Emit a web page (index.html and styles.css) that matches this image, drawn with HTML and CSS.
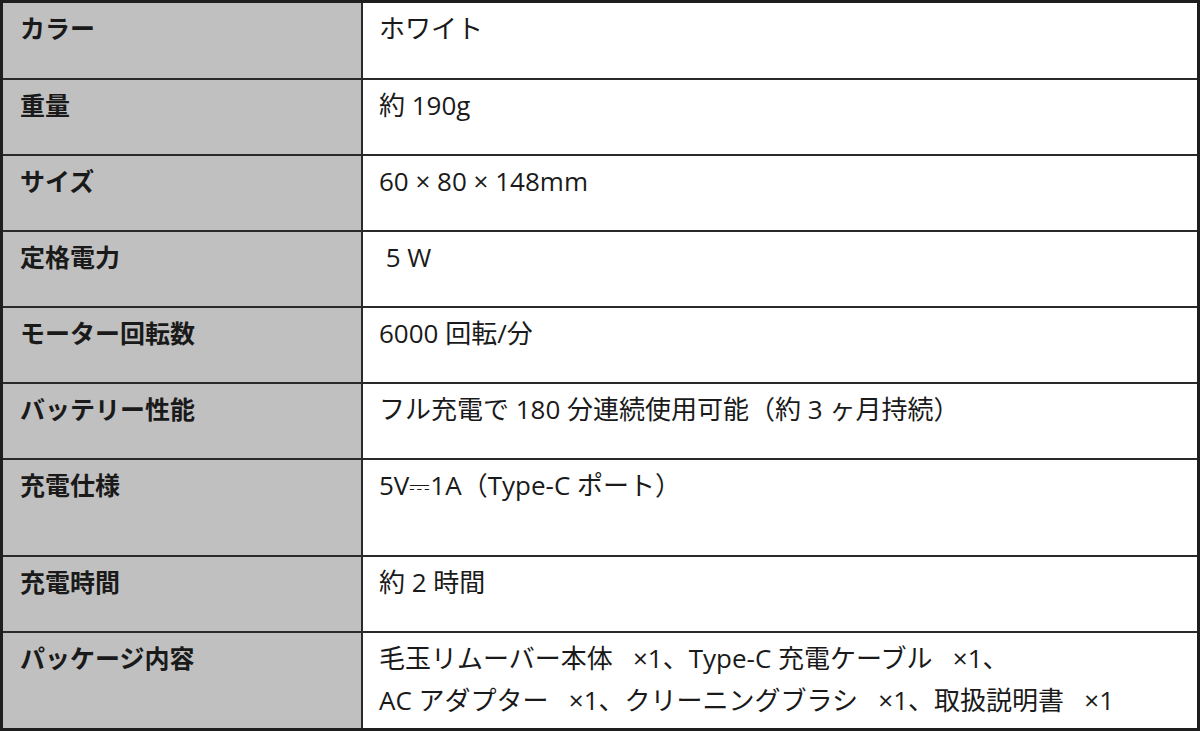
FILE: index.html
```html
<!DOCTYPE html>
<html lang="ja">
<head>
<meta charset="utf-8">
<link rel="stylesheet" href="styles.css">
</head>
<body>
<div class="spec">
  <div class="row"><div class="label">カラー</div><div class="value">ホワイト</div></div>
  <div class="row"><div class="label">重量</div><div class="value">約 190g</div></div>
  <div class="row"><div class="label">サイズ</div><div class="value">60 × 80 × 148mm</div></div>
  <div class="row"><div class="label">定格電力</div><div class="value">&nbsp;5 W</div></div>
  <div class="row"><div class="label">モーター回転数</div><div class="value">6000 回転/分</div></div>
  <div class="row"><div class="label">バッテリー性能</div><div class="value">フル充電で 180 分連続使用可能（約 3 ヶ月持続）</div></div>
  <div class="row"><div class="label">充電仕様</div><div class="value">5V⎓1A（Type-C ポート）</div></div>
  <div class="row"><div class="label">充電時間</div><div class="value">約 2 時間</div></div>
  <div class="row last"><div class="label">パッケージ内容</div><div class="value">毛玉リムーバー本体&nbsp;&nbsp;&nbsp;×1、Type-C 充電ケーブル&nbsp;&nbsp;&nbsp;×1、<br>AC アダプター&nbsp;&nbsp;&nbsp;×1、クリーニングブラシ&nbsp;&nbsp;&nbsp;×1、取扱説明書&nbsp;&nbsp;&nbsp;×1</div></div>
</div>
</body>
</html>
```

FILE: styles.css
```css
html, body {
  margin: 0;
  padding: 0;
  background: #ffffff;
}

.spec {
  box-sizing: border-box;
  width: 1200px;
  height: 731px;
  border: 3px solid #1e1e1e;
  display: grid;
  grid-template-rows: 77px repeat(5, 76px) 97px 76px 1fr;
  font-family: "Open Sans", "Noto Sans CJK JP", sans-serif;
  font-size: 26px;
  color: #1a1a1a;
}

.row {
  display: grid;
  grid-template-columns: 360px 1fr;
  border-bottom: 2px solid #2a2a2a;
}

.row.last {
  border-bottom: none;
}

.label {
  background: #c0c0c0;
  border-right: 2px solid #2a2a2a;
  padding: 4px 0 0 17px;
  line-height: 42px;
  font-weight: 700;
  font-size: 25px;
}

.value {
  padding: 4px 0 0 16px;
  line-height: 42px;
}
```
